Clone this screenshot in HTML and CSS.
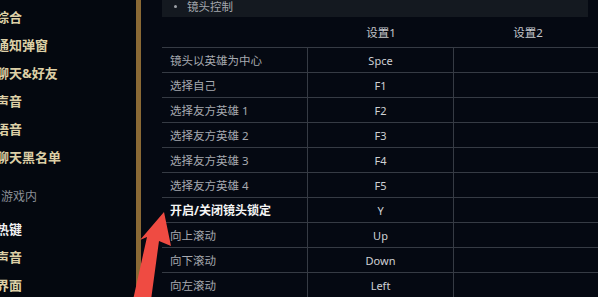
FILE: index.html
```html
<!DOCTYPE html>
<html lang="zh">
<head>
<meta charset="utf-8">
<link rel="stylesheet" href="styles.css">
</head>
<body>
<div class="page">
  <nav class="sidebar">
    <ul class="menu">
      <li class="item">综合</li>
      <li class="item">通知弹窗</li>
      <li class="item">聊天&amp;好友</li>
      <li class="item">声音</li>
      <li class="item">语音</li>
      <li class="item">聊天黑名单</li>
      <li class="section">游戏内</li>
      <li class="item active">热键</li>
      <li class="item">声音</li>
      <li class="item">界面</li>
    </ul>
  </nav>
  <main class="content">
    <div class="group-bar"><span class="bullet"></span><span class="group-title">镜头控制</span></div>
    <div class="table">
      <div class="head">
        <div class="cell c1"></div>
        <div class="cell c2">设置1</div>
        <div class="cell c3">设置2</div>
      </div>
      <div class="row"><div class="cell c1">镜头以英雄为中心</div><div class="cell c2">Spce</div><div class="cell c3"></div></div>
      <div class="row"><div class="cell c1">选择自己</div><div class="cell c2">F1</div><div class="cell c3"></div></div>
      <div class="row"><div class="cell c1">选择友方英雄 1</div><div class="cell c2">F2</div><div class="cell c3"></div></div>
      <div class="row"><div class="cell c1">选择友方英雄 2</div><div class="cell c2">F3</div><div class="cell c3"></div></div>
      <div class="row"><div class="cell c1">选择友方英雄 3</div><div class="cell c2">F4</div><div class="cell c3"></div></div>
      <div class="row"><div class="cell c1">选择友方英雄 4</div><div class="cell c2">F5</div><div class="cell c3"></div></div>
      <div class="row"><div class="cell c1 strong">开启/关闭镜头锁定</div><div class="cell c2">Y</div><div class="cell c3"></div></div>
      <div class="row"><div class="cell c1">向上滚动</div><div class="cell c2">Up</div><div class="cell c3"></div></div>
      <div class="row"><div class="cell c1">向下滚动</div><div class="cell c2">Down</div><div class="cell c3"></div></div>
      <div class="row"><div class="cell c1">向左滚动</div><div class="cell c2">Left</div><div class="cell c3"></div></div>
    </div>
  </main>
  <svg class="arrow" width="598" height="297" viewBox="0 0 598 297">
    <polygon points="164,212 171,246 159,241 151,300 133,300 147,237 140,240" fill="#ef4b42"/>
  </svg>
</div>
</body>
</html>
```

FILE: styles.css
```css
html, body {
  margin: 0;
  padding: 0;
  background: #050912;
}
body {
  width: 598px;
  height: 297px;
  overflow: hidden;
  font-family: "Noto Sans", "Noto Sans CJK SC", sans-serif;
}
.page {
  position: relative;
  display: flex;
  width: 598px;
  height: 297px;
  overflow: hidden;
}
.sidebar {
  width: 136px;
  flex: none;
  background: #04080f;
  border-right: 5px solid #8a6935;
}
.menu {
  list-style: none;
  margin: 0;
  padding: 3px 0 0 0;
}
.item {
  height: 28px;
  line-height: 28px;
  font-size: 13px;
  font-weight: bold;
  color: #ddd0a6;
  margin-left: -4px;
  white-space: nowrap;
}
.item.active {
  color: #f2f2f2;
}
.section {
  height: 28px;
  line-height: 28px;
  margin-top: 12px;
  margin-bottom: 4px;
  font-size: 12px;
  color: #8a8f96;
  padding-left: 1px;
}
.content {
  flex: none;
  width: 440px;
  padding-left: 21px;
  display: flex;
  flex-direction: column;
}
.group-bar {
  width: 426px;
  height: 17px;
  background: #141920;
  display: flex;
  align-items: center;
  padding-bottom: 4px;
  box-sizing: border-box;
}
.bullet {
  width: 3px;
  height: 3px;
  border-radius: 50%;
  background: #9ea2a8;
  margin-left: 12px;
}
.group-title {
  margin-left: 10px;
  font-size: 11.5px;
  color: #a3a7ad;
  line-height: 13px;
}
.table {
  display: flex;
  flex-direction: column;
  width: 440px;
}
.head {
  display: flex;
  height: 30px;
  align-items: center;
}
.head .cell {
  text-align: center;
  font-size: 11.5px;
  color: #c4c7cc;
}
.row {
  display: flex;
  height: 25px;
  box-sizing: border-box;
  border-top: 1px solid #363b44;
}
.cell {
  display: flex;
  align-items: center;
  box-sizing: border-box;
  white-space: nowrap;
}
.c1 {
  width: 146px;
  padding-left: 8px;
  font-size: 11.5px;
  color: #a7aab0;
}
.c2 {
  width: 146px;
  justify-content: center;
  font-size: 11px;
  color: #cfd1d5;
}
.c3 {
  flex: 1;
  justify-content: center;
}
.row .c1, .row .c2 {
  border-right: 1px solid #363b44;
}
.c1.strong {
  color: #f4f4f4;
  font-weight: bold;
  font-size: 12px;
}
.arrow {
  position: absolute;
  left: 0;
  top: 0;
  pointer-events: none;
}
```
